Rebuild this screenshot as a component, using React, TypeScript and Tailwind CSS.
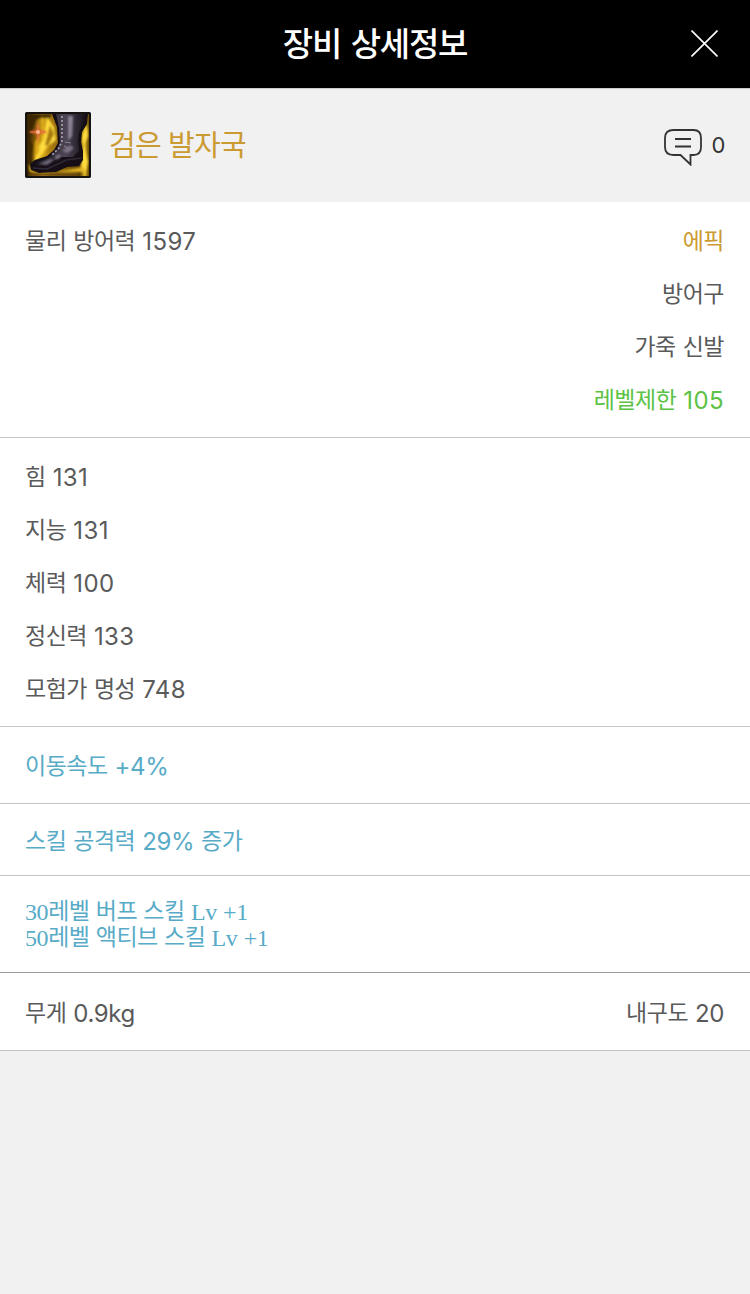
import clsx from 'clsx';
import type { ReactNode } from 'react';

const stats = ['힘 131', '지능 131', '체력 100', '정신력 133', '모험가 명성 748'];

const summary = [
  { label: '에픽', className: 'text-[#cb9a30]' },
  { label: '방어구', className: '' },
  { label: '가죽 신발', className: '' },
  { label: '레벨제한 105', className: 'text-[#5bc245]' },
];

// Latin runs and numbers are set slightly larger and lower than the hangul around them
function Label({ children, className }: { children: string; className?: string }) {
  return (
    <span
      className={clsx(
        'text-[23px] tracking-[-0.5px] whitespace-pre [word-spacing:1px]',
        className,
      )}
    >
      {children.split(/([0-9A-Za-z+%.]+)/).map((part, i) =>
        i % 2 ? (
          <span
            key={i}
            className={clsx(
              'align-[-1px] text-[24px] leading-none',
              /^\d{3,}$/.test(part) ? 'tracking-[0.4px]' : 'tracking-[-0.4px]',
            )}
          >
            {part}
          </span>
        ) : (
          part
        ),
      )}
    </span>
  );
}

function Row({ children }: { children: ReactNode }) {
  return <div className="flex h-[53px] items-center justify-between">{children}</div>;
}

function Section({ children, className }: { children: ReactNode; className?: string }) {
  return (
    <section className={clsx('border-b border-[#c5c5c5] bg-white pr-[26px] pl-[25px]', className)}>
      {children}
    </section>
  );
}

function BootIcon() {
  return (
    <svg width="66" height="66" viewBox="0 0 66 66">
      <defs>
        <linearGradient id="flame" x1="0" y1="0" x2="1" y2="0">
          <stop offset="0" stopColor="#2b1c05" />
          <stop offset="0.12" stopColor="#7a5308" />
          <stop offset="0.25" stopColor="#d9a91a" />
          <stop offset="0.38" stopColor="#a97a10" />
          <stop offset="0.85" stopColor="#5a3e06" />
          <stop offset="0.93" stopColor="#dcb226" />
          <stop offset="1" stopColor="#664707" />
        </linearGradient>
        <linearGradient id="leather" x1="0" y1="0" x2="1" y2="0">
          <stop offset="0" stopColor="#19151d" />
          <stop offset="0.3" stopColor="#29242e" />
          <stop offset="0.6" stopColor="#4d4554" />
          <stop offset="0.75" stopColor="#38313e" />
          <stop offset="1" stopColor="#17131b" />
        </linearGradient>
        <filter id="soft">
          <feGaussianBlur stdDeviation="1" />
        </filter>
        <filter id="edge">
          <feGaussianBlur stdDeviation="0.5" />
        </filter>
      </defs>
      <rect width="66" height="66" rx="2" fill="#111" />
      <rect x="2" y="2" width="62" height="62" fill="url(#flame)" />
      <g filter="url(#soft)">
        <path d="M2 2H27L24 7L17 5L11 8L7 20L2 30Z" fill="#3b2605" />
        <path d="M3 26L8 34L6 47L11 53L5 60L2 58Z" fill="#3d2904" />
        <path d="M22 5L29 15L31 28L22 35L14 47L9 50L13 35L18 28Z" fill="#ffdc3c" />
        <path d="M10 30L15 23L14 40L9 47Z" fill="#dba814" />
        <path d="M25 13L29 22L23 34L20 33Z" fill="#a5760d" />
        <path d="M62 13L63 24L59 33L63 50L60 62L56 57L58 35L57 24Z" fill="#ffdc3c" />
        <path d="M4 52L5 60H61L58 55L32 60L8 58Z" fill="#e2b422" />
        <path d="M3 64L8 61H50L56 64Z" fill="#6b4a07" />
      </g>
      <g filter="url(#edge)">
        <path
          d="M27 2H63L62 12L57 20L56 30L58 39V48L54 54L42 55L31 60L14 61L6 58L5 52L10 48L22 44L29 38L33 31L32 15Z"
          fill="#121014"
        />
        <path
          d="M31 2H60L58 12L54 20L53 29L54 39L48 45L36 45L24 51L13 54L10 51L23 46L31 39L35 31L34 16Z"
          fill="url(#leather)"
        />
      </g>
      <g filter="url(#soft)">
        <path d="M43 4H48L47 24L43 29Z" fill="#8d8496" />
        <path d="M37 39L45 33L49 36L43 41Z" fill="#7d7486" />
        <path d="M14 52L25 47L29 48L22 53Z" fill="#70687a" />
        <path d="M30 44L35 42L36 45L31 48Z" fill="#7b7282" />
      </g>
      <path
        d="M8 56L22 57L35 51L41 48L56 46"
        fill="none"
        stroke="#2f2a35"
        strokeWidth="1.5"
        filter="url(#edge)"
      />
      <path
        d="M37 4V29L34 36L27 43"
        fill="none"
        stroke="#a39cab"
        strokeWidth="1.8"
        strokeDasharray="2 2"
      />
      <path d="M40 30L46 31M39 34L43 36" stroke="#8e8697" />
      <path
        d="M13 9L14 18L23 20L14 22L13 33L12 22L3 20L12 18Z"
        fill="#e05c30"
        filter="url(#soft)"
      />
      <path d="M5 20H21M13 12V28" stroke="#e87848" />
      <circle cx="13" cy="20" r="2" fill="#ffb790" />
      <rect
        x="1"
        y="1"
        width="64"
        height="64"
        rx="1.5"
        fill="none"
        stroke="#161310"
        strokeWidth="2"
      />
    </svg>
  );
}

function CommentIcon() {
  return (
    <svg width="40" height="42" viewBox="-1 -4 40 42" fill="none" stroke="#333" strokeWidth="1.8">
      <path d="M9.5 2H29.5Q37 2 37 10V19Q37 27 29.5 27H26.5V36.5L16.5 27H9.5Q1 27 1 19V10Q1 2 9.5 2Z" />
      <path d="M11 11H27M11 18.5H27" />
    </svg>
  );
}

export default function App() {
  return (
    <div className="min-h-[1294px] bg-[#f1f1f1] font-['Inter','Noto_Sans_CJK_KR',sans-serif] text-[24px] leading-[26px] text-[#5a5a5a]">
      <header className="grid h-[88px] grid-cols-[1fr_auto_1fr] items-center bg-black px-8 text-white">
        <h1 className="col-start-2 text-[33px] leading-[40px] font-medium tracking-[-1.2px] [word-spacing:2px]">
          장비 상세정보
        </h1>
        <button type="button" aria-label="닫기" className="justify-self-end pb-0.5">
          <svg
            className="block"
            width="27"
            height="27"
            viewBox="0 0 27 27"
            stroke="white"
            strokeWidth="1.6"
          >
            <path d="M0.5 0.5L26.5 26.5M26.5 0.5L0.5 26.5" />
          </svg>
        </button>
      </header>

      <div className="flex h-[114px] items-center border-t border-[#ccc] px-[25px] pb-0.5">
        <BootIcon />
        <h2 className="ml-[18px] pt-0.5 text-[29px] leading-[36px] tracking-[-0.8px] text-[#cb9a30]">
          검은 발자국
        </h2>
        <div className="ml-auto flex items-center gap-[9px] text-[#333]">
          <CommentIcon />
          <span className="text-[22px] tracking-[-0.5px]">0</span>
        </div>
      </div>

      <Section className="flex justify-between pt-3 pb-[11px]">
        <Row>
          <Label>물리 방어력 1597</Label>
        </Row>
        <div className="flex flex-col items-end">
          {summary.map((item) => (
            <Row key={item.label}>
              <Label className={item.className}>{item.label}</Label>
            </Row>
          ))}
        </div>
      </Section>

      <Section className="pt-3 pb-[11px]">
        {stats.map((stat) => (
          <Row key={stat}>
            <Label>{stat}</Label>
          </Row>
        ))}
      </Section>

      <Section className="pt-3 pb-[11px] text-[#58abc7]">
        <Row>
          <Label>이동속도 +4%</Label>
        </Row>
      </Section>

      <Section className="pt-2.5 pb-2 text-[#58abc7]">
        <Row>
          <Label>스킬 공격력 29% 증가</Label>
        </Row>
      </Section>

      <Section className="flex h-[97px] flex-col border-b-[#999] pt-[23px] font-['Liberation_Serif','Noto_Sans_CJK_KR',serif] text-[#58abc7]">
        <Label>30레벨 버프 스킬 Lv +1</Label>
        <Label>50레벨 액티브 스킬 Lv +1</Label>
      </Section>

      <Section className="pt-[13px] pb-[11px]">
        <Row>
          <Label>무게 0.9kg</Label>
          <Label>내구도 20</Label>
        </Row>
      </Section>
    </div>
  );
}
